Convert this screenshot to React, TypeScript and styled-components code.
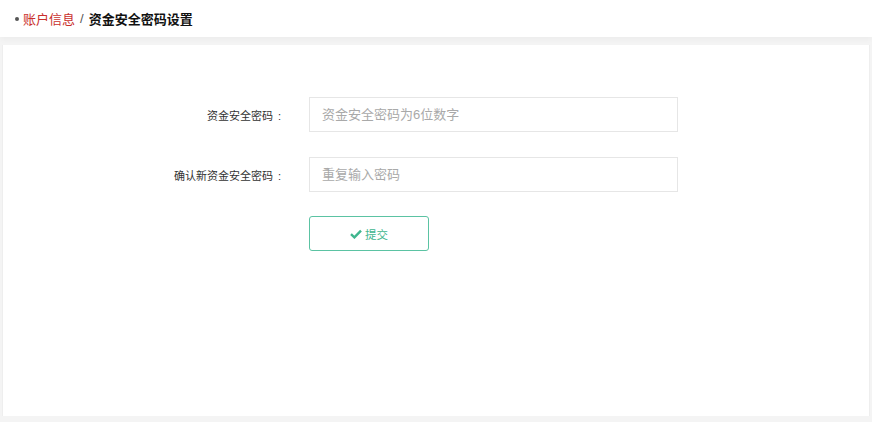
import React from "react";
import styled, { createGlobalStyle } from "styled-components";

const GlobalStyle = createGlobalStyle`
  html, body {
    margin: 0;
    padding: 0;
    background: #f4f4f4;
    font-family: "Liberation Sans", "Noto Sans CJK SC", sans-serif;
  }
`;

const Page = styled.div`
  width: 872px;
  height: 422px;
  overflow: hidden;
  display: flex;
  flex-direction: column;
`;

const Header = styled.header`
  height: 37px;
  background: #fff;
  display: flex;
  align-items: center;
  padding-left: 15px;
  font-size: 13px;
  box-shadow: 0 2px 6px rgba(0, 0, 0, 0.04);
  margin-bottom: 8px;
  position: relative;
  z-index: 1;
`;

const Bullet = styled.span`
  width: 4px;
  height: 4px;
  border-radius: 50%;
  background: #555;
  margin-right: 4px;
`;

const Crumb = styled.span<{ $current?: boolean }>`
  color: ${(p) => (p.$current ? "#111" : "#c9302c")};
  font-weight: ${(p) => (p.$current ? "bold" : "normal")};
`;

const Sep = styled.span`
  color: #555;
  margin: 0 5px;
`;

const Panel = styled.main`
  margin: 0 2px;
  height: 371px;
  background: #fff;
  border-left: 1px solid #eee;
  border-right: 1px solid #eee;
  padding-top: 52px;
  box-sizing: border-box;
`;

const Form = styled.form`
  display: grid;
  grid-template-columns: 282px 369px;
  column-gap: 24px;
  row-gap: 25px;
  align-items: center;
`;

const Label = styled.label`
  justify-self: end;
  padding-right: 4px;
  font-size: 11px;
  color: #333;
`;

const Colon = styled.span`
  margin-left: 5px;
`;

const Input = styled.input`
  height: 35px;
  box-sizing: border-box;
  border: 1px solid #e6e6e6;
  padding: 0 12px;
  font-size: 13px;
  font-family: inherit;
  color: #333;
  outline: none;
  &::placeholder {
    color: #a9a9a9;
  }
`;

const SubmitButton = styled.button`
  grid-column: 2;
  margin-top: -1px;
  width: 120px;
  height: 35px;
  border: 1px solid #5bc3a3;
  border-radius: 3px;
  background: #fff;
  color: #3fb68e;
  font-size: 11.5px;
  font-family: inherit;
  display: flex;
  align-items: center;
  justify-content: center;
  gap: 3px;
  cursor: pointer;
`;

const Check = () => (
  <svg width="12" height="10" viewBox="0 0 12 10">
    <path d="M1 5.2 L4.4 8.4 L11 1.6" fill="none" stroke="#3fb68e" strokeWidth="2.4" />
  </svg>
);

export default function App() {
  return (
    <Page>
      <GlobalStyle />
      <Header>
        <Bullet />
        <Crumb>账户信息</Crumb>
        <Sep>/</Sep>
        <Crumb $current>资金安全密码设置</Crumb>
      </Header>
      <Panel>
        <Form onSubmit={(e) => e.preventDefault()}>
          <Label>
            资金安全密码<Colon>:</Colon>
          </Label>
          <Input type="password" placeholder="资金安全密码为6位数字" />
          <Label>
            确认新资金安全密码<Colon>:</Colon>
          </Label>
          <Input type="password" placeholder="重复输入密码" />
          <SubmitButton type="submit">
            <Check />
            提交
          </SubmitButton>
        </Form>
      </Panel>
    </Page>
  );
}
